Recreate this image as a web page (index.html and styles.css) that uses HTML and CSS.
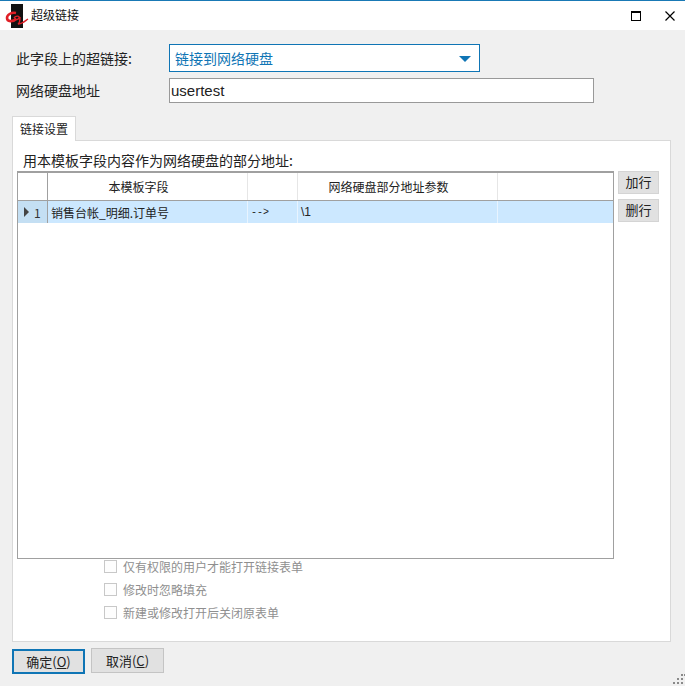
FILE: index.html
```html
<!DOCTYPE html>
<html lang="zh">
<head>
<meta charset="utf-8">
<title>超级链接</title>
<link rel="stylesheet" href="styles.css">
</head>
<body>
<div class="window">
  <header class="titlebar">
    <svg class="logo" width="24" height="24" viewBox="0 0 24 24">
      <rect x="6" y="0" width="12" height="24" fill="#111"/>
      <path d="M11 9C6 8 2 11 2 14C2 18 8 18 11 15" fill="none" stroke="#e01f26" stroke-width="2.600"/>
      <path d="M9 14C11 11 15 12 14 14C13 16 10 16 10 14M15 13C15 16 15 19 13 20C17 20 20 17 23 15" fill="none" stroke="#e01f26" stroke-width="1.400"/>
    </svg>
    <span class="title">超级链接</span>
    <span class="spacer"></span>
    <svg class="winbtn max" width="10" height="10" viewBox="0 0 10 10"><rect x="0.500" y="0.500" width="9" height="9" fill="none" stroke="#000"/><rect x="0" y="0" width="10" height="2" fill="#000"/></svg>
    <svg class="winbtn" width="10" height="10" viewBox="0 0 10 10"><path d="M0.500 0.500L9.500 9.500M9.500 0.500L0.500 9.500" stroke="#000" stroke-width="1.200"/></svg>
  </header>
  <main class="content">
    <div class="form-row row-combo">
      <label class="field-label">此字段上的超链接:</label>
      <div class="combo"><span>链接到网络硬盘</span><i class="arrow"></i></div>
    </div>
    <div class="form-row row-input">
      <label class="field-label">网络硬盘地址</label>
      <div class="textbox">usertest</div>
    </div>
    <div class="tabs"><div class="tab">链接设置</div></div>
    <section class="panel">
      <p class="caption">用本模板字段内容作为网络硬盘的部分地址:</p>
      <div class="grid-row">
        <div class="grid">
          <div class="tr head">
            <div class="cell c0"></div>
            <div class="cell c1">本模板字段</div>
            <div class="cell c2"></div>
            <div class="cell c3">网络硬盘部分地址参数</div>
            <div class="cell c4"></div>
          </div>
          <div class="tr data">
            <div class="cell c0"><i class="rowmark"></i>1</div>
            <div class="cell c1">销售台帐_明细.订单号</div>
            <div class="cell c2">--&gt;</div>
            <div class="cell c3">\1</div>
            <div class="cell c4"></div>
          </div>
        </div>
        <div class="side">
          <button class="sidebtn">加行</button>
          <button class="sidebtn">删行</button>
        </div>
      </div>
      <div class="checks">
        <div class="check"><i class="box"></i>仅有权限的用户才能打开链接表单</div>
        <div class="check"><i class="box"></i>修改时忽略填充</div>
        <div class="check"><i class="box"></i>新建或修改打开后关闭原表单</div>
      </div>
    </section>
    <footer class="actions">
      <button class="btn primary">确定(<u>O</u>)</button>
      <button class="btn">取消(<u>C</u>)</button>
    </footer>
  </main>
  <svg class="grip" width="12" height="12" viewBox="0 0 12 12" fill="#8a8a8a">
    <rect x="8" y="0" width="2" height="2"/><rect x="11" y="0" width="1" height="2"/>
    <rect x="4" y="4" width="2" height="2"/><rect x="8" y="4" width="2" height="2"/>
    <rect x="0" y="8" width="2" height="2"/><rect x="4" y="8" width="2" height="2"/><rect x="8" y="8" width="2" height="2"/>
  </svg>
</div>
</body>
</html>
```
FILE: styles.css
```css
* { box-sizing: border-box; }
html, body { margin: 0; padding: 0; }
body {
  width: 685px;
  height: 686px;
  overflow: hidden;
  font-family: "Noto Sans CJK SC", "Liberation Sans", sans-serif;
  font-size: 13px;
  color: #222;
  background: #f0f0f0;
}
.window {
  position: relative;
  height: 686px;
  display: flex;
  flex-direction: column;
  border-top: 1px solid #1979b5;
}
.titlebar {
  height: 29px;
  flex: none;
  display: flex;
  align-items: center;
  background: #fff;
  padding: 0 10px 0 5px;
}
.logo { flex: none; }
.title { margin-left: 2px; font-size: 12px; line-height: 16px; margin-top: -2px; color: #111; }
.spacer { flex: 1; }
.winbtn { flex: none; }
.max { margin-right: 24px; }
.content { flex: 1; padding: 14px 14px 0 12px; display: flex; flex-direction: column; }
.form-row { display: flex; align-items: center; }
.field-label { width: 157px; padding-left: 4px; font-size: 14px; line-height: 20px; }
.row-combo { height: 28px; }
.row-input { height: 25px; margin-top: 6px; }
.row-input .field-label { margin-top: -2px; }
.combo {
  width: 311px;
  height: 28px;
  border: 1px solid #0f75b5;
  background: #fff;
  display: flex;
  align-items: center;
  justify-content: space-between;
  padding: 0 8px 0 5px;
  color: #0f75b5;
  font-size: 14px;
}
.arrow {
  width: 0;
  height: 0;
  border-left: 6px solid transparent;
  border-right: 6px solid transparent;
  border-top: 6px solid #0f75b5;
  margin-top: 1px;
}
.textbox {
  width: 425px;
  height: 25px;
  border: 1px solid #999;
  background: #fff;
  padding-left: 1px;
  font-family: "Liberation Sans", sans-serif;
  font-size: 15px;
  line-height: 24px;
}
.tabs { display: flex; margin-top: 13px; position: relative; z-index: 1; }
.tab {
  width: 64px;
  height: 25px;
  margin-bottom: -1px;
  background: #fff;
  border: 1px solid #d9d9d9;
  border-bottom: 0;
  font-size: 12px;
  text-align: center;
  line-height: 23px;
}
.panel {
  width: 659px;
  height: 502px;
  flex: none;
  background: #fff;
  border: 1px solid #d9d9d9;
  padding: 10px 0 0 4px;
  display: flex;
  flex-direction: column;
}
.caption { margin: 0 0 0 6px; height: 20px; font-size: 14px; line-height: 19px; }
.grid-row { display: flex; }
.grid {
  width: 597px;
  height: 388px;
  border: 1px solid #a0a0a0;
  border-top-width: 2px;
}
.tr { display: grid; grid-template-columns: 30px 200px 50px 200px 1fr; }
.head { height: 28px; border-bottom: 1px solid #a0a0a0; }
.data { height: 22px; background: #cce8ff; }
.cell {
  border-right: 1px solid #e6e6e6;
  font-size: 12px;
  display: flex;
  align-items: center;
}
.head .cell { justify-content: center; padding-right: 18px; }
.head .c0 { border-right: 1px solid #a0a0a0; }
.head .c4, .data .c4 { border-right: 0; }
.data .cell { padding-left: 3px; border-right-color: #e8f4ff; }
.data .c0 { background: #c4dff3; border-right: 1px solid #a0a0a0; padding-left: 6px; color: #333; }
.data .c2 { font-family: "Liberation Mono", monospace; font-size: 10px; }
.data .c3 { font-family: "Liberation Sans", sans-serif; }
.rowmark {
  width: 0;
  height: 0;
  border-top: 5px solid transparent;
  border-bottom: 5px solid transparent;
  border-left: 5px solid #444;
  margin-right: 5px;
}
.side { display: flex; flex-direction: column; gap: 5px; margin-left: 4px; }
.sidebtn {
  width: 41px;
  height: 23px;
  padding: 0 0 2px;
  background: #e1e1e1;
  border: 1px solid #d4d4d4;
  font: inherit;
  font-size: 13px;
  color: #222;
}
.checks { margin: -4px 0 0 87px; color: #8f8f8f; font-size: 12px; }
.check { height: 23px; display: flex; align-items: center; }
.box {
  width: 13px;
  height: 13px;
  margin-right: 6px;
  border: 1px solid #c8c8c8;
  background: #fdfdfd;
}
.actions { display: flex; align-items: flex-start; gap: 6px; margin-top: 6px; }
.btn {
  width: 73px;
  height: 25px;
  padding: 0;
  background: #e1e1e1;
  border: 1px solid #c4c4c4;
  font: inherit;
  font-size: 13px;
  color: #222;
}
.primary { border: 2px solid #0f75b5; margin-top: 1px; }
.grip { position: absolute; right: 0; bottom: 0; }
```
